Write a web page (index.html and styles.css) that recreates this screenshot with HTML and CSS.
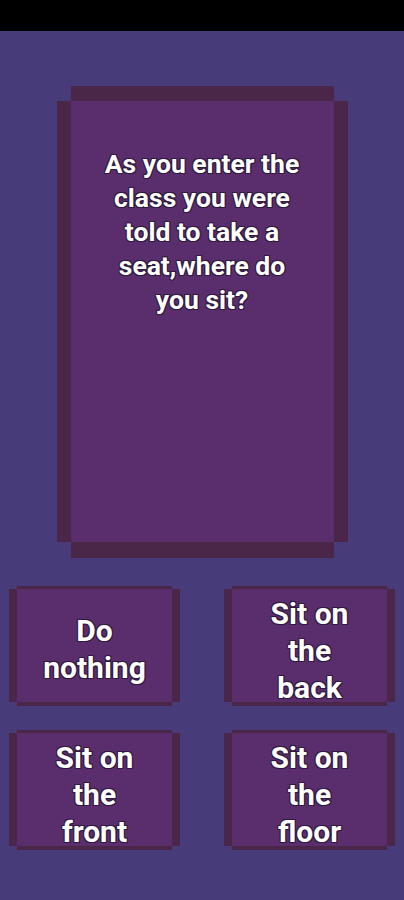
FILE: index.html
```html
<!DOCTYPE html>
<html lang="en">
<head>
    <meta charset="UTF-8">
    <title>Quiz</title>
    <link rel="stylesheet" href="styles.css">
</head>
<body>
    <div class="status-bar"></div>
    <div class="screen">
        <div class="question-card">
            <p class="question">As you enter the class you were told to take a seat,where do you sit?</p>
        </div>
        <div class="answers">
            <button class="answer">Do nothing</button>
            <button class="answer">Sit on the back</button>
            <button class="answer">Sit on the front</button>
            <button class="answer">Sit on the floor</button>
        </div>
    </div>
</body>
</html>
```

FILE: styles.css
```css
body {
    margin: 0;
    background-color: #483b79;
    font-family: Roboto, 'Noto Sans', sans-serif;
    min-height: 900px;
}
.status-bar {
    height: 31px;
    background-color: #000;
}
.screen {
    padding-top: 70px;
}
.question-card {
    width: 263px;
    height: 441px;
    margin: 0 auto;
    box-sizing: border-box;
    padding: 46px 30px 0;
    background-color: #5a2e6d;
    box-shadow: 0 -15px 0 #4a2649, 0 16px 0 #4a2649, -14px 0 0 #4a2649, 14px 0 0 #4a2649;
}
.question {
    margin: 0;
    color: #fff;
    font-size: 26.5px;
    font-weight: bold;
    line-height: 34px;
    text-align: center;
    text-shadow: 1px 0 0 #2f1a3d, -1px 0 0 #2f1a3d, 0 1px 0 #2f1a3d, 0 -1px 0 #2f1a3d,
        1px 1px 0 #2f1a3d, -1px -1px 0 #2f1a3d, 1px -1px 0 #2f1a3d, -1px 1px 0 #2f1a3d;
}
.answers {
    display: grid;
    grid-template-columns: 155px 155px;
    grid-auto-rows: 113px;
    column-gap: 60px;
    row-gap: 31px;
    margin-top: 47px;
    padding-left: 17px;
}
.answer {
    border: none;
    padding: 6px 23px 0;
    margin: 0;
    background-color: #5a2e6d;
    box-shadow: 0 -3px 0 #4a2649, 0 4px 0 #4a2649, -8px 0 0 #4a2649, 8px 0 0 #4a2649;
    color: #fff;
    font-family: Roboto, 'Noto Sans', sans-serif;
    font-size: 30px;
    font-weight: bold;
    line-height: 37px;
    text-align: center;
    text-shadow: 1px 0 0 #2f1a3d, -1px 0 0 #2f1a3d, 0 1px 0 #2f1a3d, 0 -1px 0 #2f1a3d,
        1px 1px 0 #2f1a3d, -1px -1px 0 #2f1a3d, 1px -1px 0 #2f1a3d, -1px 1px 0 #2f1a3d;
}
```
